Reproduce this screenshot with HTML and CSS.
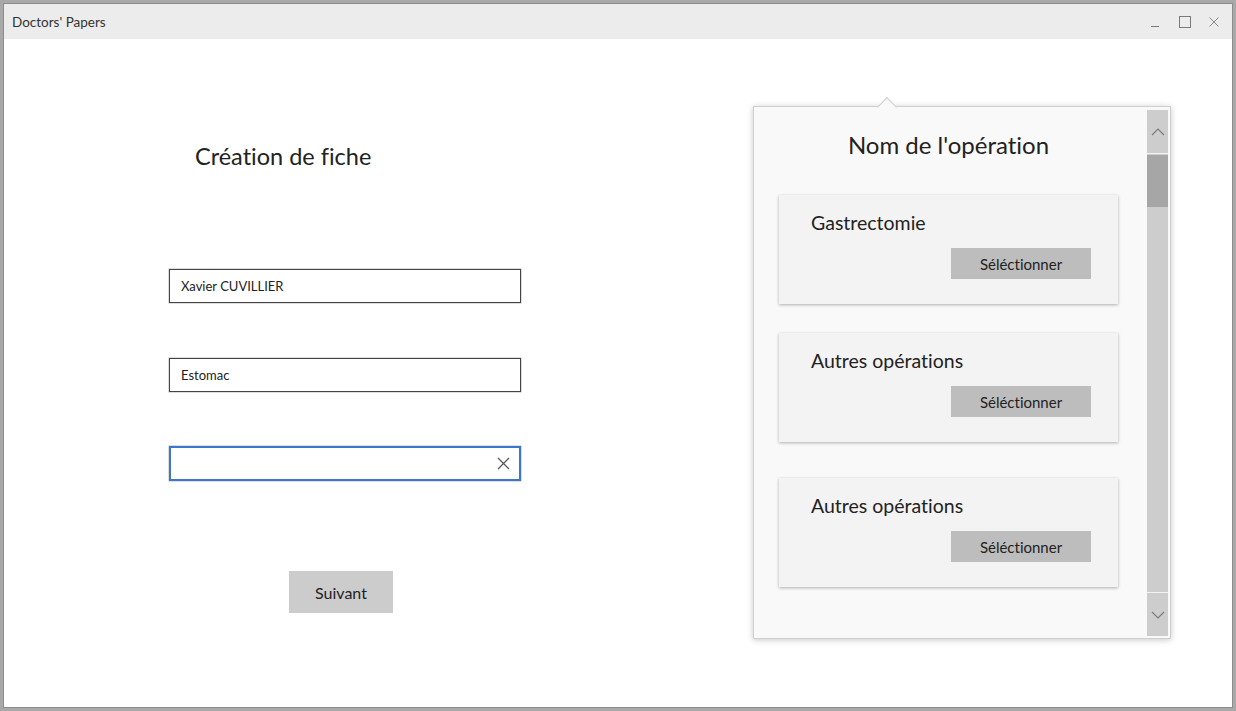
FILE: index.html
```html
<!DOCTYPE html>
<html lang="fr">
<head>
<meta charset="utf-8">
<title>Doctors' Papers</title>
<link rel="stylesheet" href="styles.css">
</head>
<body>
<div class="window">
  <div class="titlebar">
    <span class="app-title">Doctors' Papers</span>
    <div class="controls">
      <svg class="ctl" width="12" height="12" viewBox="0 0 12 12"><path d="M1 10.5h8" stroke="#7a7a7a" stroke-width="1" fill="none"/></svg>
      <svg class="ctl" width="12" height="12" viewBox="0 0 12 12"><rect x="0.5" y="0.5" width="11" height="11" stroke="#7a7a7a" stroke-width="1" fill="none"/></svg>
      <svg class="ctl" width="12" height="12" viewBox="0 0 12 12"><path d="M1.5 1.5l9 9M10.5 1.5l-9 9" stroke="#8a8a8a" stroke-width="1" fill="none"/></svg>
    </div>
  </div>
  <div class="content">
    <div class="form">
      <h1 class="form-title">Création de fiche</h1>
      <div class="field">Xavier CUVILLIER</div>
      <div class="field field--mid">Estomac</div>
      <div class="field field--focus">
        <svg class="clear" width="13" height="13" viewBox="0 0 13 13"><path d="M1 1l11 11M12 1L1 12" stroke="#555" stroke-width="1.2" fill="none"/></svg>
      </div>
      <button class="next">Suivant</button>
    </div>
    <div class="flyout">
      <div class="notch"></div>
      <div class="flyout-body">
        <h2 class="flyout-title">Nom de l'opération</h2>
        <div class="card">
          <div class="card-title">Gastrectomie</div>
          <button class="select">Séléctionner</button>
        </div>
        <div class="card">
          <div class="card-title">Autres opérations</div>
          <button class="select">Séléctionner</button>
        </div>
        <div class="card card--far">
          <div class="card-title">Autres opérations</div>
          <button class="select">Séléctionner</button>
        </div>
      </div>
      <div class="scrollbar">
        <div class="sb-btn">
          <svg width="14" height="8" viewBox="0 0 14 8"><path d="M1 7l6-6 6 6" stroke="#7c7c7c" stroke-width="1.2" fill="none"/></svg>
        </div>
        <div class="sb-track"><div class="sb-thumb"></div></div>
        <div class="sb-btn">
          <svg width="14" height="8" viewBox="0 0 14 8"><path d="M1 1l6 6 6-6" stroke="#7c7c7c" stroke-width="1.2" fill="none"/></svg>
        </div>
      </div>
    </div>
  </div>
</div>
</body>
</html>
```
FILE: styles.css
```css
* { box-sizing: border-box; }
html, body { margin: 0; padding: 0; }
body {
  width: 1236px;
  height: 711px;
  background: #a9a9a9;
  font-family: "Lato", "Noto Sans", sans-serif;
  font-variant-ligatures: none;
  color: #222;
  padding: 3px 3px 3px 3px;
  overflow: hidden;
}
button { font-variant-ligatures: none; }
.window {
  width: 1230px;
  height: 705px;
  background: #fff;
  border: 1px solid #8c8c8c;
  display: flex;
  flex-direction: column;
}
.titlebar {
  height: 35px;
  background: #ececec;
  display: flex;
  align-items: center;
  justify-content: space-between;
  padding: 0 12px 0 8px;
  flex: none;
}
.app-title {
  font-size: 13.5px;
  color: #333;
}
.controls {
  display: flex;
  gap: 17px;
  align-items: center;
}
.content {
  flex: 1;
  display: flex;
  position: relative;
}
.form {
  width: 584px;
  padding-left: 165px;
  padding-top: 102px;
  display: flex;
  flex-direction: column;
  align-items: flex-start;
}
.form-title {
  margin: 0 0 98px 26px;
  font-weight: 400;
  font-size: 23.5px;
  line-height: 30px;
  color: #222;
}
.field {
  width: 352px;
  height: 34px;
  border: 1px solid #444;
  box-shadow: 0 0 0 0.5px #bbb;
  font-size: 13px;
  line-height: 32px;
  padding-left: 11px;
  color: #222;
  margin-bottom: 55px;
  position: relative;
}
.field--mid { margin-bottom: 54px; }
.field--focus {
  border: 2px solid #3b78c9;
  height: 35px;
  margin-bottom: 90px;
}
.clear {
  position: absolute;
  right: 9px;
  top: 9px;
}
.next {
  margin-left: 120px;
  width: 104px;
  height: 42px;
  border: none;
  background: #cccccc;
  font-family: inherit;
  font-size: 16px;
  color: #222;
  padding: 0;
}
.flyout {
  margin-top: 67px;
  margin-left: 165px;
  width: 418px;
  height: 533px;
  background: #f9f9f9;
  border: 1px solid #cfcfcf;
  box-shadow: 0 1px 6px rgba(0,0,0,0.22);
  display: flex;
  padding: 3px 2px 2px 0;
  position: relative;
}
.notch {
  position: absolute;
  top: -7px;
  left: 126px;
  width: 14px;
  height: 14px;
  background: #f9f9f9;
  border-top: 1px solid #cfcfcf;
  border-left: 1px solid #cfcfcf;
  transform: rotate(45deg);
}
.flyout-body {
  flex: 1;
  display: flex;
  flex-direction: column;
  align-items: center;
  padding-top: 19px;
  padding-right: 4px;
}
.flyout-title {
  margin: 0 0 34px 0;
  font-weight: 400;
  font-size: 24px;
  line-height: 32px;
  color: #222;
}
.card {
  width: 339px;
  height: 109px;
  background: #f3f3f3;
  box-shadow: 0 1px 3px rgba(0,0,0,0.3);
  padding: 16px 27px 0 32px;
  display: flex;
  flex-direction: column;
  align-items: flex-start;
  margin-bottom: 29px;
  flex: none;
}
.card--far { margin-top: 7px; }
.card-title {
  font-size: 19.5px;
  line-height: 24px;
  color: #222;
}
.select {
  align-self: flex-end;
  margin-top: 13px;
  width: 140px;
  height: 31px;
  border: none;
  background: #bdbdbd;
  font-family: inherit;
  font-size: 15px;
  color: #222;
  padding: 0;
}
.scrollbar {
  width: 21px;
  flex: none;
  display: flex;
  flex-direction: column;
  background: #cdcdcd;
}
.sb-btn {
  height: 43px;
  display: flex;
  align-items: center;
  justify-content: center;
  flex: none;
}
.sb-track {
  flex: 1;
  border-top: 1px solid #f2f2f2;
  border-bottom: 1px solid #f2f2f2;
  padding-top: 1px;
}
.sb-thumb {
  height: 52px;
  background: #a6a6a6;
}
```
